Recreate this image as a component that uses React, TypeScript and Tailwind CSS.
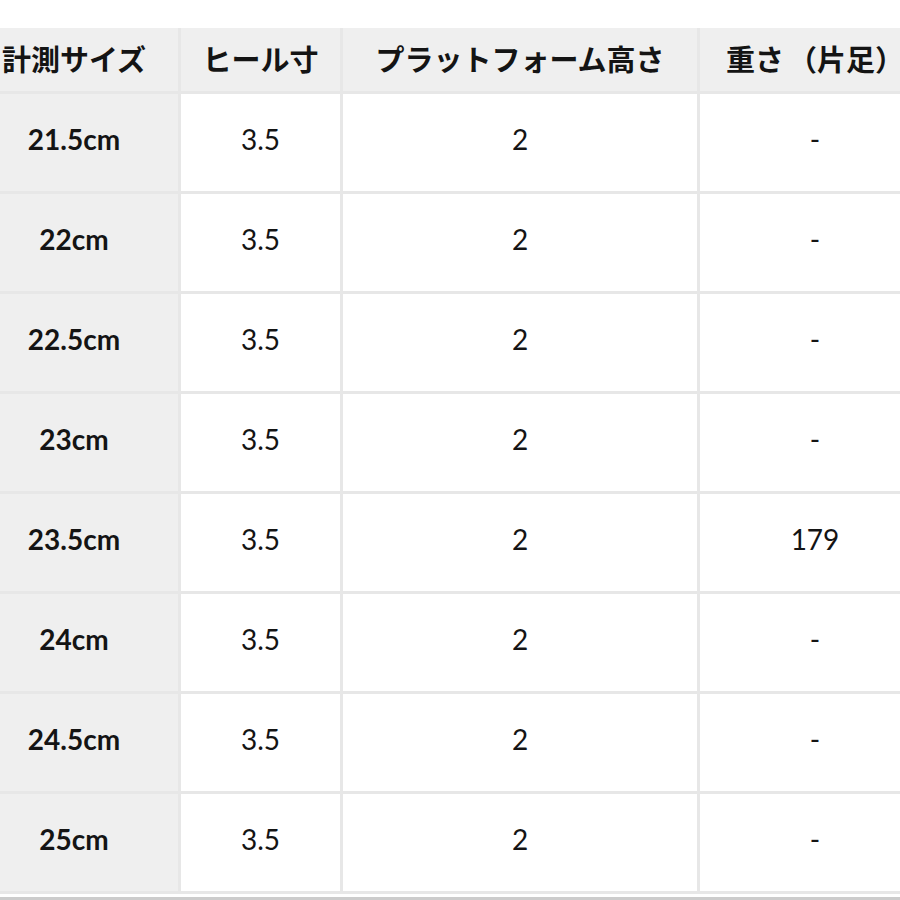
import React from "react";

const rows: [string, string, string, string][] = [
  ["21.5cm", "3.5", "2", "-"],
  ["22cm", "3.5", "2", "-"],
  ["22.5cm", "3.5", "2", "-"],
  ["23cm", "3.5", "2", "-"],
  ["23.5cm", "3.5", "2", "179"],
  ["24cm", "3.5", "2", "-"],
  ["24.5cm", "3.5", "2", "-"],
  ["25cm", "3.5", "2", "-"],
];

const font = { fontFamily: "Lato, 'Noto Sans CJK JP', sans-serif" };

export default function App() {
  return (
    <div className="w-[900px] h-[900px] bg-white overflow-hidden text-[#141414]" style={font}>
      <div className="h-[28px]" />
      <div className="ml-[-30px] w-[960px] grid grid-cols-[208px_159px_354px_230px] gap-[3px] bg-[#e7e7e7] pb-[3px]">
        {["計測サイズ", "ヒール寸", "プラットフォーム高さ", "重さ（片足）"].map((h, i) => (
          <div
            key={i}
            className="h-[63px] bg-[#efefef] flex items-center justify-center text-[29px] font-bold whitespace-nowrap"
          >
            {i === 3 ? (
              <span>
                重さ<span className="ml-[4px]">（片足）</span>
              </span>
            ) : (
              h
            )}
          </div>
        ))}
        {rows.map((r, ri) => (
          <React.Fragment key={ri}>
            <div className="h-[97px] pb-[7px] bg-[#efefef] flex items-center justify-center text-[28px] font-bold">
              {r[0]}
            </div>
            <div className="h-[97px] pb-[7px] bg-white flex items-center justify-center text-[28px]">{r[1]}</div>
            <div className="h-[97px] pb-[7px] bg-white flex items-center justify-center text-[28px]">{r[2]}</div>
            <div className="h-[97px] pb-[7px] bg-white flex items-center justify-center text-[28px]">{r[3]}</div>
          </React.Fragment>
        ))}
      </div>
      <div className="h-[3px]" />
      <div className="h-[3px] bg-[#cccccc]" />
    </div>
  );
}
